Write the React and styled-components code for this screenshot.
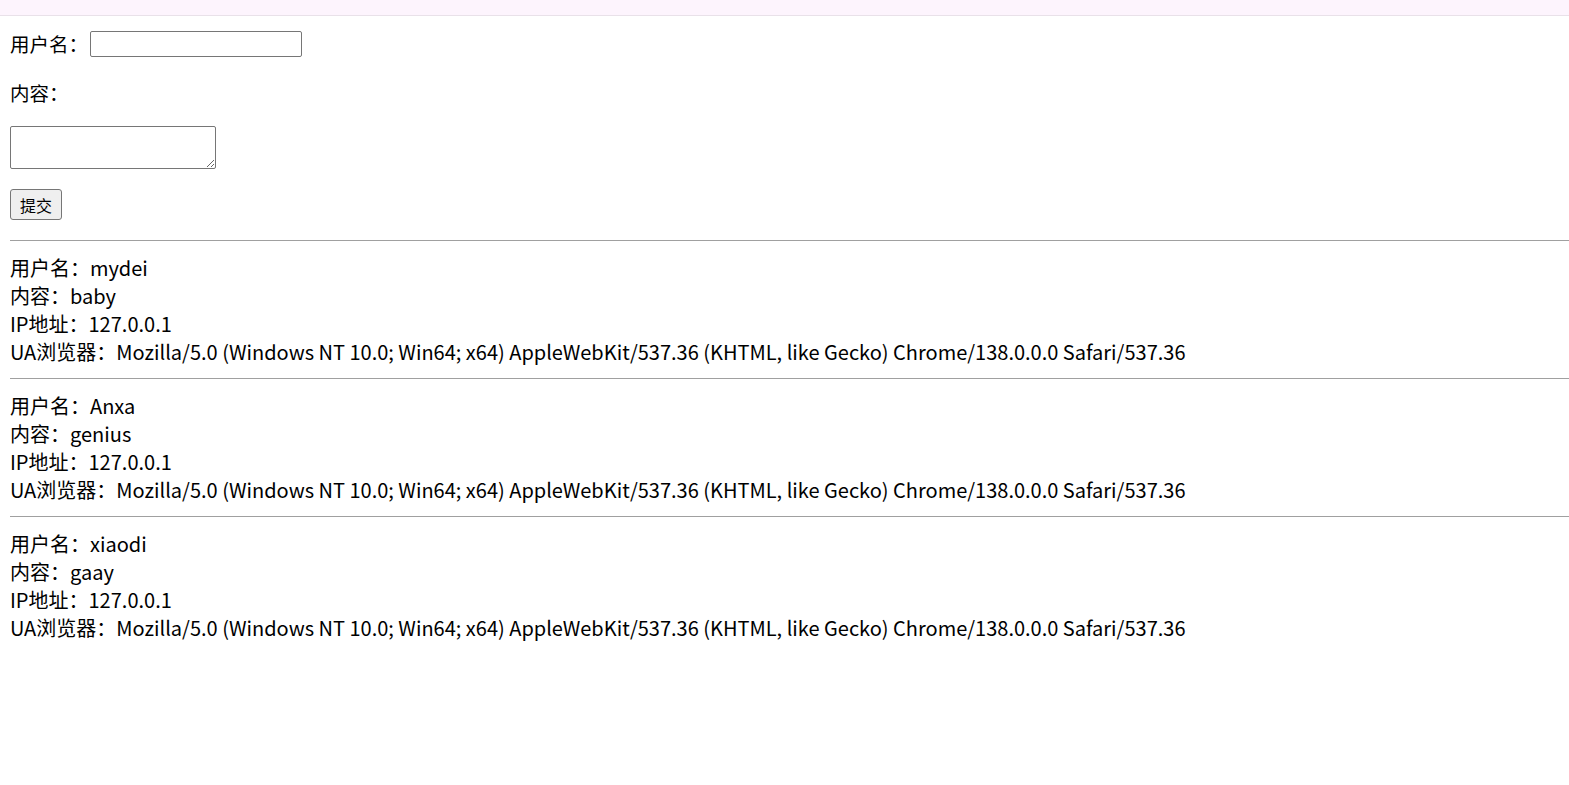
import styled, { createGlobalStyle } from "styled-components";

const GlobalStyle = createGlobalStyle`
  html, body {
    margin: 0;
    padding: 0;
    background: #fff;
  }
  body {
    font-family: "Noto Sans CJK SC", "Noto Sans", sans-serif;
    color: #000;
  }
`;

const TopBar = styled.div`
  height: 16px;
  background: #fdf4fd;
  border-bottom: 1px solid #e9e1e9;
  box-sizing: border-box;
`;

const Page = styled.div`
  padding: 0 0 0 10px;
`;

const Form = styled.form`
  display: flex;
  flex-direction: column;
  align-items: flex-start;
  padding-top: 15px;
`;

const Row = styled.div`
  display: flex;
  align-items: center;
  height: ${p => p.$h || 26}px;
  margin-top: ${p => p.$mt || 0}px;
`;

const Label = styled.span`
  font-size: 19.5px;
  line-height: 28px;
  width: ${p => (p.$w ? `${p.$w}px` : "auto")};
`;

const TextInput = styled.input`
  width: 212px;
  height: 26px;
  box-sizing: border-box;
  border: 1px solid #767676;
  border-radius: 2px;
  padding: 1px 3px;
  margin: 0;
  font: inherit;
`;

const TextArea = styled.textarea`
  width: 206px;
  height: 43px;
  box-sizing: border-box;
  border: 1px solid #767676;
  border-radius: 2px;
  margin: 19px 0 0 0;
  font: inherit;
`;

const Submit = styled.button`
  margin-top: 20px;
  width: 52px;
  height: 31px;
  box-sizing: border-box;
  background: #efefef;
  border: 1px solid #767676;
  border-radius: 3px;
  font-family: "Noto Sans CJK SC", sans-serif;
  font-size: 16px;
  padding: 0;
  color: #000;
`;

const Rule = styled.hr`
  border: none;
  border-top: 1px solid #a0a0a0;
  margin: ${p => p.$mt || 0}px 0 0 0;
  height: 0;
`;

const Entry = styled.div`
  display: flex;
  flex-direction: column;
  padding: 13px 0 12px;
`;

const Line = styled.div`
  font-size: 20px;
  line-height: 28px;
  white-space: nowrap;
`;

const messages = [
  { user: "mydei", content: "baby" },
  { user: "Anxa", content: "genius" },
  { user: "xiaodi", content: "gaay" },
];

const UA =
  "Mozilla/5.0 (Windows NT 10.0; Win64; x64) AppleWebKit/537.36 (KHTML, like Gecko) Chrome/138.0.0.0 Safari/537.36";

export default function App() {
  return (
    <>
      <GlobalStyle />
      <TopBar />
      <Page>
        <Form onSubmit={e => e.preventDefault()}>
          <Row>
            <Label $w={80}>用户名：</Label>
            <TextInput type="text" />
          </Row>
          <Row $mt={22} $h={28}>
            <Label>内容：</Label>
          </Row>
          <TextArea />
          <Submit type="submit">提交</Submit>
        </Form>
        {messages.map((m, i) => (
          <div key={i}>
            <Rule $mt={i === 0 ? 20 : 0} />
            <Entry>
              <Line>用户名：{m.user}</Line>
              <Line>内容：{m.content}</Line>
              <Line>IP地址：127.0.0.1</Line>
              <Line>UA浏览器：{UA}</Line>
            </Entry>
          </div>
        ))}
      </Page>
    </>
  );
}
